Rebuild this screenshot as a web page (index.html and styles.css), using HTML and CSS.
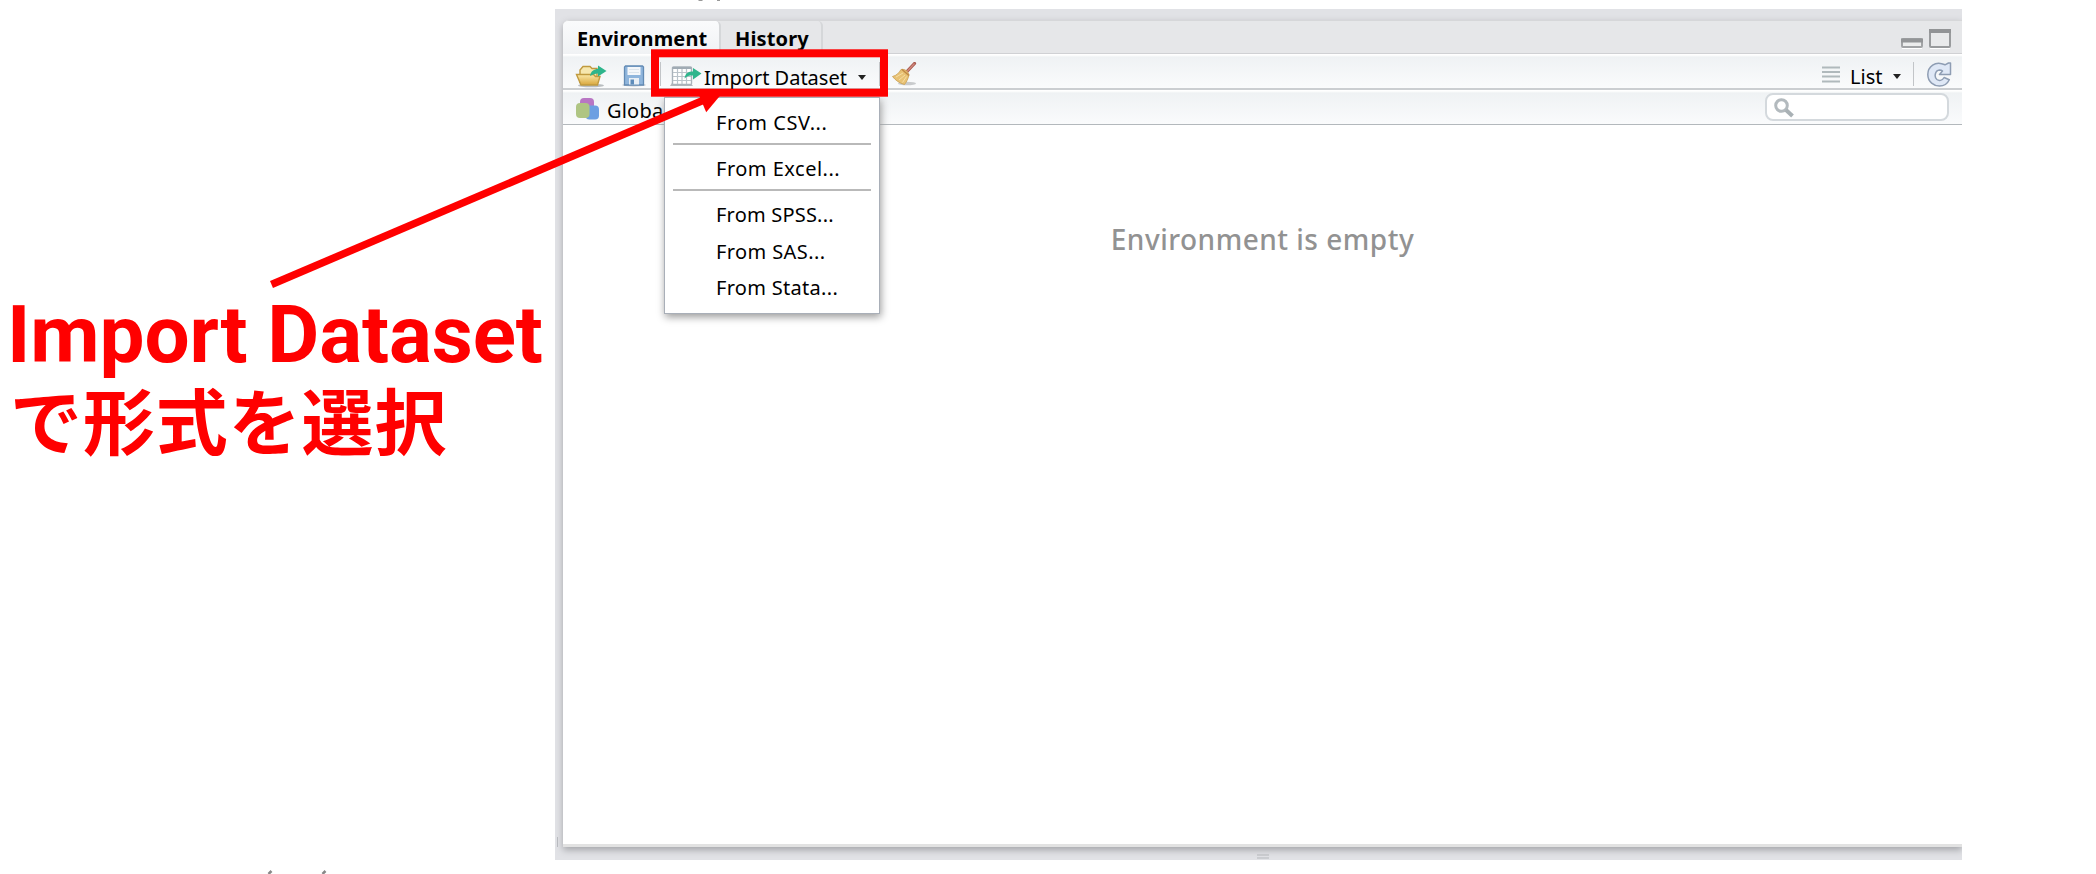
FILE: index.html
```
<!DOCTYPE html>
<html lang="ja">
<head>
<meta charset="utf-8">
<title>Environment</title>
<link rel="stylesheet" href="styles.css">
</head>
<body>
<div class="slide">
  <div class="caption">
    <div class="caption-latin">Import Dataset</div>
    <div class="caption-ja">で形式を選択</div>
  </div>
  <div class="frame">
    <section class="pane">
      <header class="tabs">
        <div class="tab active"><span class="t-env">Environment</span></div>
        <div class="tab"><span class="t-his">History</span></div>
        <div class="window-buttons">
          <svg width="24" height="22" viewBox="0 0 24 22"><rect x="2" y="11" width="20" height="8" rx="1" fill="#eceded" stroke="#a2a4a6" stroke-width="2"/><path d="M1 12.500h22" stroke="#939597" stroke-width="4"/><path d="M2 20.500h20" stroke="#fff"/></svg>
          <svg width="24" height="22" viewBox="0 0 24 22"><rect x="2" y="2" width="20" height="17" rx="1" fill="#e9eaeb" stroke="#999b9d" stroke-width="2"/><path d="M1 3h22" stroke="#929496" stroke-width="4"/><path d="M2 20.500h20" stroke="#fff"/></svg>
        </div>
      </header>
      <div class="toolbar">
        <svg class="i-open" width="34" height="24" viewBox="0 0 34 24">
          <defs><linearGradient id="gold" x1="0" y1="0" x2="0" y2="1"><stop offset="0" stop-color="#fbe9a8"/><stop offset="1" stop-color="#d9a73c"/></linearGradient></defs>
          <ellipse cx="16" cy="21.500" rx="13" ry="1.800" fill="#b9bdc0"/>
          <path d="M5 19V6l3-3.500h7l2 2h5v8" fill="#f6e7ae" stroke="#c09a3f" stroke-width="1.400"/>
          <path d="M1.500 10.500h17l2 2h4.500l-2.500 8.500H6z" fill="url(#gold)" stroke="#c09a3f" stroke-width="1.400"/>
          <path d="M15 12c1-5 4-7 8-7V1.500l8.500 5.500-8.500 5.500V9.500c-3 0-5 1-8 2.500z" fill="#2eb58c"/>
        </svg>
        <svg class="i-save" width="26" height="24" viewBox="0 0 26 24">
          <ellipse cx="13" cy="21" rx="12" ry="1.500" fill="#c5c9cd"/>
          <path d="M4.500 2h17l1 1v18h-19V3z" fill="#8fb5dc" stroke="#638bb4" stroke-width="1.300"/>
          <path d="M6.500 3h13v8h-13z" fill="#f4f7fa"/><path d="M8 5.500h10M8 8.500h10" stroke="#dde5ec"/>
          <path d="M8 14h10v6.500H8z" fill="#e9eff5"/><path d="M9.500 15.500h3.500v5H9.500z" fill="#5e8cba"/>
        </svg>
        <i class="sep sep-left"></i>
        <svg class="i-import" width="32" height="24" viewBox="0 0 32 24">
          <path d="M0 22l2.500-4H20l3 4z" fill="#b3b7bb"/>
          <rect x="2.500" y="3" width="19" height="17.500" rx="1" fill="#fff" stroke="#a9b2ba" stroke-width="1.400"/>
          <path d="M2.500 4h19" stroke="#a0abb4" stroke-width="2"/>
          <path d="M3 8.500h18M3 12.500h18M3 16.500h18M7.500 5v15M12 5v15M16.500 5v15" stroke="#bac3ca" stroke-width="1.200"/>
          <path d="M14.500 14.500c1-5.500 4-7 8.500-7V4l8.500 5.500-8.500 6V11.500c-4 0-6 .5-8.500 3z" fill="#2eb58c"/>
        </svg>
        <span class="label l-import">Import Dataset</span>
        <i class="caret"></i>
        <i class="sep sep-mid"></i>
        <svg class="i-broom" width="28" height="25" viewBox="0 0 28 25">
          <ellipse cx="15" cy="21.500" rx="9" ry="1.800" fill="#c9cbcd"/>
          <path d="M22.500 1.500L14.500 10" stroke="#a8584c" stroke-width="3.200" stroke-linecap="round"/><path d="M22.500 1.500L15 9.500" stroke="#d08a80" stroke-width="1.200"/>
          <path d="M9 7.500c4-1 7.500 2.500 8 5.500-1 4-2.500 7-4.500 9.500C8 21.500 3 18 .5 14.500c4-1 6.500-3.500 8.500-7z" fill="#e8c274" stroke="#c9a052" stroke-width=".8"/>
          <path d="M10 7.500l7 6" stroke="#c08743" stroke-width="1.500"/>
          <path d="M4 15l7-4M7 18l6-5M10.500 20.500l4-6" stroke="#f7dda3"/>
        </svg>
        <span class="grow"></span>
        <svg class="i-lines" width="18" height="18" viewBox="0 0 18 18"><path d="M0 1.500h18M0 6h18M0 10.500h18M0 15.500h18" stroke="#b0b9bc" stroke-width="1.800"/></svg>
        <span class="label l-list">List</span>
        <i class="caret caret-list"></i>
        <i class="sep sep-right"></i>
        <svg class="i-refresh" width="25" height="25" viewBox="0 0 25 25">
          <path d="M18 2.800C8-2 .8 5 .8 12.500S7 24 12.500 24c4.500 0 8-2.500 9.800-6.300l-5.200-2.200c-2 3.500-5.200 3.500-7.200 2-3-2.400-2-9 2.600-9.500 1.500 0 2.500.5 3 1l-3 3.500h11V1h-2z" fill="#dfe8f6" stroke="#8e9db3" stroke-width="1.500" stroke-linejoin="round"/>
        </svg>
      </div>
      <div class="toolbar scope">
        <svg class="i-global" width="25" height="23" viewBox="0 0 25 23"><rect x="5" y="0" width="14" height="14" rx="4" fill="#b876c4"/><rect x="10.500" y="7.500" width="13.500" height="14" rx="4" fill="#6c9fe2"/><rect x="1" y="5" width="13.500" height="15" rx="4" fill="#afc583"/></svg>
        <span class="label l-global">Globa</span>
        <span class="grow"></span>
        <div class="search"><svg width="22" height="22" viewBox="0 0 22 22"><circle cx="7.500" cy="7.500" r="5.800" fill="#fff" stroke="#b3babe" stroke-width="3"/><path d="M12 12l6.500 6" stroke="#a9b1b5" stroke-width="4"/></svg></div>
      </div>
      <main class="content"><span class="empty">Environment is empty</span></main>
      <div class="pane-foot"></div>
    </section>
    <div class="splitter"><i></i></div>
    <i class="side-grip"></i>
    <div class="menu">
      <div class="item m1">From CSV...</div>
      <hr>
      <div class="item m2">From Excel...</div>
      <hr>
      <div class="item m3">From SPSS...</div>
      <div class="item m4">From SAS...</div>
      <div class="item m5">From Stata...</div>
    </div>
  </div>
  <svg class="annotation" width="2096" height="874" viewBox="0 0 2096 874">
    <path d="M271.500 284.500L704 100" stroke="#f00" stroke-width="7.500"/>
    <path d="M696.800 90L723.600 91.600L706.200 112.300z" fill="#f00"/>
    <rect x="655" y="53.300" width="229" height="39.400" fill="none" stroke="#f00" stroke-width="8"/>
    <path d="M698.500 0h4M717 0h3" stroke="#999" stroke-width="2"/>
    <path d="M268.500 874l3-3M322.500 874l3-3" stroke="#888" stroke-width="2.500"/>
  </svg>
</div>
</body>
</html>
```
FILE: styles.css
```
* { box-sizing: border-box; }
body { margin: 0; background: #fff; font-family: "Noto Sans", sans-serif; color: #000; }
svg, i { display: block; flex: none; }
.slide { position: relative; display: flex; width: 2096px; height: 874px; overflow: hidden; }
.caption { width: 555px; padding: 291px 0 0 8px; flex: none; color: #f00; font-weight: 700; white-space: nowrap; }
.caption-latin { margin-left: -1px; font-family: Roboto, sans-serif; font-size: 80px; line-height: 88px; letter-spacing: -0.1px; }
.caption-ja { margin-left: 2px; font-family: "Noto Sans CJK JP", sans-serif; font-size: 72px; line-height: 77px; letter-spacing: 0.9px; }
.frame { position: relative; width: 1407px; height: 851px; margin-top: 9px; padding: 11px 0 0 8px; background: #e1e2e6; }
.pane { display: flex; flex-direction: column; height: 827px; background: #fff; border-top-left-radius: 6px; box-shadow: 0 3px 7px #a3a4a8; clip-path: inset(-11px 0 -12px -8px); }
.tabs { display: flex; height: 34px; flex: none; background: #e6e7e9; border-top: 1px solid #d6d7d9; border-bottom: 1px solid #d0d1d4; border-top-left-radius: 6px; }
.tab { width: 102px; height: 33px; padding: 5px 0 0 14px; font-weight: 700; font-size: 20px; line-height: 26px; border-right: 2px solid #d5d7d9; white-space: nowrap; border-radius: 5px 5px 0 0; }
.tab.active { width: 158px; height: 34px; padding-left: 14px; background: linear-gradient(#fafbfc, #f0f2f4); }
.t-env, .t-his { letter-spacing: 0.15px; }
.window-buttons { display: flex; gap: 4px; margin: 7px 10px 0 auto; }
.toolbar { display: flex; align-items: flex-start; height: 36px; flex: none; background: linear-gradient(#fff 0 1px, #eff2f4 3px, #fafbfc); border-bottom: 2px solid #cbced1; }
.toolbar.scope { height: 35px; border-bottom: 1px solid #b3b8bc; }
.label { display: block; font-size: 20px; line-height: 26px; white-space: nowrap; font-weight: 450; }
.i-open { margin: 10px 0 0 12px; }
.i-save { margin: 10px 0 0 12px; }
.sep { width: 1px; height: 24px; margin-top: 8px; background: #c2c5c8; }
.sep-left { margin-left: 13px; }
.i-import { margin: 10px 0 0 9px; }
.l-import { width: 144px; margin: 11px 0 0 2px; }
.caret { border: 4px solid transparent; border-top: 5px solid #222; border-bottom: 0; margin: 21px 0 0 10px; }
.caret-list { margin-top: 20px; }
.sep-mid { margin-left: 13px; }
.i-broom { margin: 8px 0 0 12px; }
.grow { flex: 1; }
.i-lines { margin-top: 12px; }
.l-list { width: 33px; margin: 10px 0 0 10px; }
.sep-right { margin-left: 12px; }
.i-refresh { margin: 8px 10px 0 13px; }
.i-global { margin: 8px 0 0 12px; }
.l-global { margin: 8px 0 0 7px; letter-spacing: 0.2px; }
.search { width: 184px; height: 28px; margin: 3px 13px 0 0; padding: 3px 7px; background: #fff; border: 2px solid #d4d9dd; border-radius: 8px; }
.content { flex: 1; text-align: center; padding-top: 95px; }
.empty { font-size: 28px; line-height: 38px; font-weight: 500; letter-spacing: 0.5px; color: #929292; white-space: nowrap; }
.pane-foot { height: 3px; background: #e2e2e2; }
.splitter { height: 13px; display: flex; justify-content: center; padding-top: 7px; }
.splitter i { width: 12px; height: 5px; border-top: 2px solid #cbcdd1; border-bottom: 2px solid #cbcdd1; }
.side-grip { position: absolute; left: 2px; bottom: 13px; width: 1px; height: 10px; background: #b8babf; }
.menu { position: absolute; left: 109px; top: 88px; width: 216px; height: 217px; padding: 5px 8px 0 8px; background: #fff; border: 1px solid #a9afb8; box-shadow: 1px 3px 8px #9a9a9a; }
.item { height: 36.500px; line-height: 39px; font-size: 20px; font-weight: 450; padding-left: 43px; white-space: nowrap; }
.m1 { letter-spacing: 0.6px; }
.m2 { letter-spacing: 0.5px; }
.m3 { letter-spacing: 0.2px; }
.m4 { letter-spacing: 0.4px; }
.m5 { letter-spacing: 0.3px; }
.menu hr { margin: 3.500px 0 4px; border: 0; height: 2px; background: #b9b9b9; }
.annotation { position: absolute; left: 0; top: 0; pointer-events: none; }
```
